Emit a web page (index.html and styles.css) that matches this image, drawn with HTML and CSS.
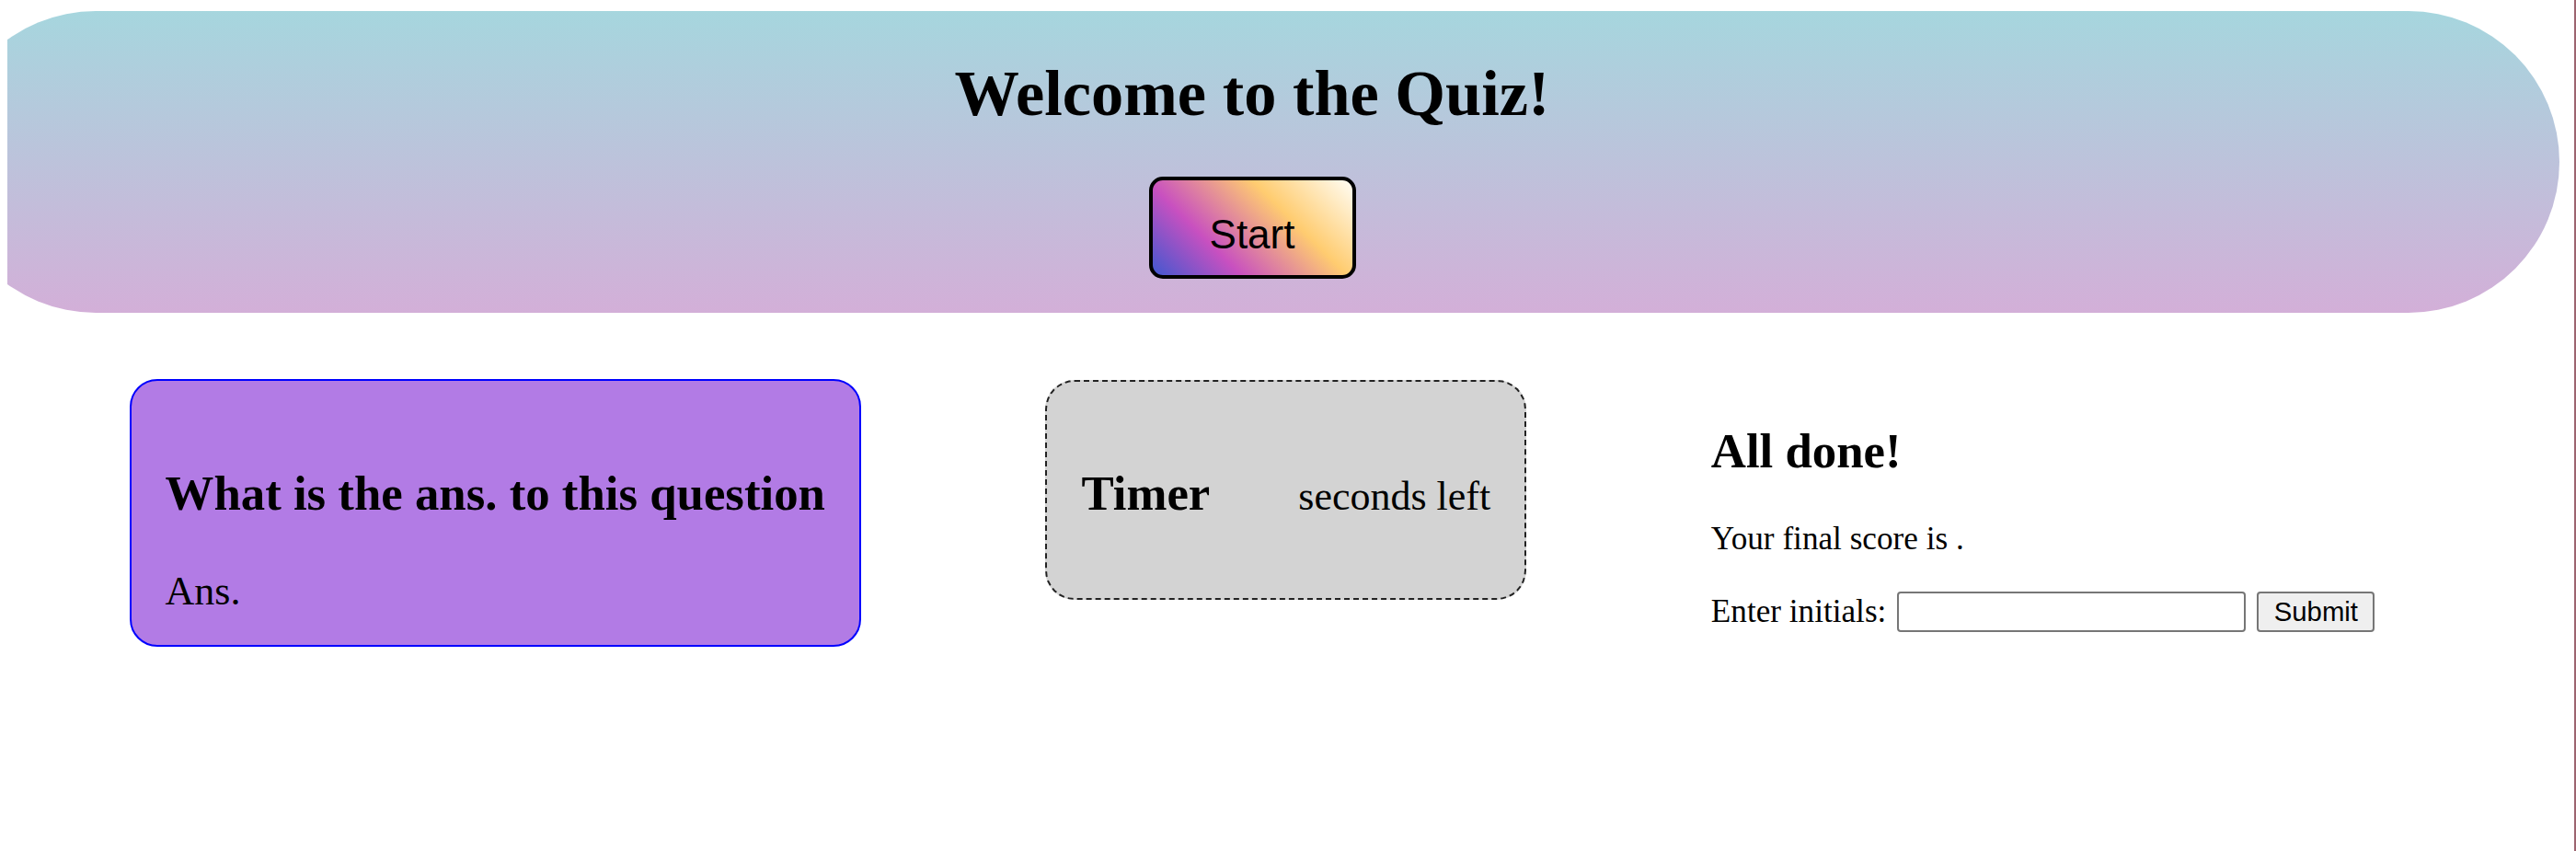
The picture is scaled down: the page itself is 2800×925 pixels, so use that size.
FILE: index.html
```html
<!DOCTYPE html>
<html lang="en">
<head>
<meta charset="utf-8">
<title>Quiz</title>
<link rel="stylesheet" href="styles.css">
</head>
<body>
<div class="page">
  <header class="hero">
    <h1 class="hero-title">Welcome to the Quiz!</h1>
    <button class="start-btn" type="button">Start</button>
  </header>
  <main class="row">
    <section class="question-card">
      <h2 class="question">What is the ans. to this question</h2>
      <p class="answer">Ans.</p>
    </section>
    <section class="timer-box">
      <h2 class="timer-title">Timer</h2>
      <span class="timer-text">seconds left</span>
    </section>
    <section class="done">
      <h2 class="done-title">All done!</h2>
      <p class="score">Your final score is .</p>
      <form class="initials-form">
        <label class="initials-label" for="initials">Enter initials:</label>
        <input class="initials-input" id="initials" type="text">
        <button class="submit-btn" type="button">Submit</button>
      </form>
    </section>
  </main>
</div>
</body>
</html>
```

FILE: styles.css
```css
html {
  min-height: 100%;
  box-sizing: border-box;
  border-right: 2px solid #9c6470;
}

body {
  margin: 8px;
  font-family: "Liberation Serif", "Times New Roman", serif;
  color: #000;
  background: #fff;
}

.page {
  margin-left: -68px;
  width: 2842px;
}

.hero {
  margin-top: 4px;
  height: 328px;
  box-sizing: border-box;
  border-radius: 164px;
  background: linear-gradient(#a6d6de, #d3afd8);
  display: flex;
  flex-direction: column;
  align-items: center;
  padding-top: 50px;
}

.hero-title {
  margin: 0;
  font-size: 70.4px;
  line-height: 78px;
  font-weight: bold;
}

.start-btn {
  margin-top: 52px;
  width: 225px;
  height: 111px;
  box-sizing: border-box;
  border: 4px solid #000;
  border-radius: 15px;
  background: linear-gradient(45deg, #4158d0 0%, #c850c0 30%, #ffcc70 66%, #fffdf5 100%);
  font-family: "Liberation Sans", Arial, sans-serif;
  font-size: 44px;
  padding: 14px 0 0;
  color: #000;
}

.row {
  display: flex;
  justify-content: space-evenly;
  align-items: flex-start;
  margin-top: 72px;
}

.question-card {
  border: 2px solid #0000ff;
  border-radius: 30px;
  background: #b27be5;
  padding: 48px 37px 33px;
}

.question {
  margin: 44px 0 0;
  font-size: 52.8px;
  font-weight: bold;
}

.answer {
  margin: 51px 0 0;
  font-size: 44px;
}

.timer-box {
  margin-top: 1px;
  display: flex;
  align-items: baseline;
  gap: 96px;
  padding: 47px 37px 40px;
  border: 2px dashed #222;
  border-radius: 32px;
  background: #d3d3d3;
}

.timer-title {
  margin: 44px 0;
  font-size: 52.8px;
  font-weight: bold;
}

.timer-text {
  font-size: 44px;
}

.done-title {
  margin: 48px 0 46px;
  font-size: 52.8px;
  font-weight: bold;
}

.score {
  margin: 0 0 37px;
  font-size: 35.2px;
}

.initials-form {
  display: flex;
  align-items: center;
  margin: 0;
  font-size: 35.2px;
}

.initials-input {
  margin: 0 0 0 12px;
  width: 379px;
  height: 44px;
  box-sizing: border-box;
  border: 2px solid #767676;
  border-radius: 4px;
  background: #fff;
}

.submit-btn {
  margin: 0 0 0 12px;
  width: 128px;
  height: 44px;
  box-sizing: border-box;
  border: 2px solid #767676;
  border-radius: 4px;
  background: #efefef;
  font-family: "Liberation Sans", Arial, sans-serif;
  font-size: 29.3px;
  color: #000;
  padding: 0;
}
```
